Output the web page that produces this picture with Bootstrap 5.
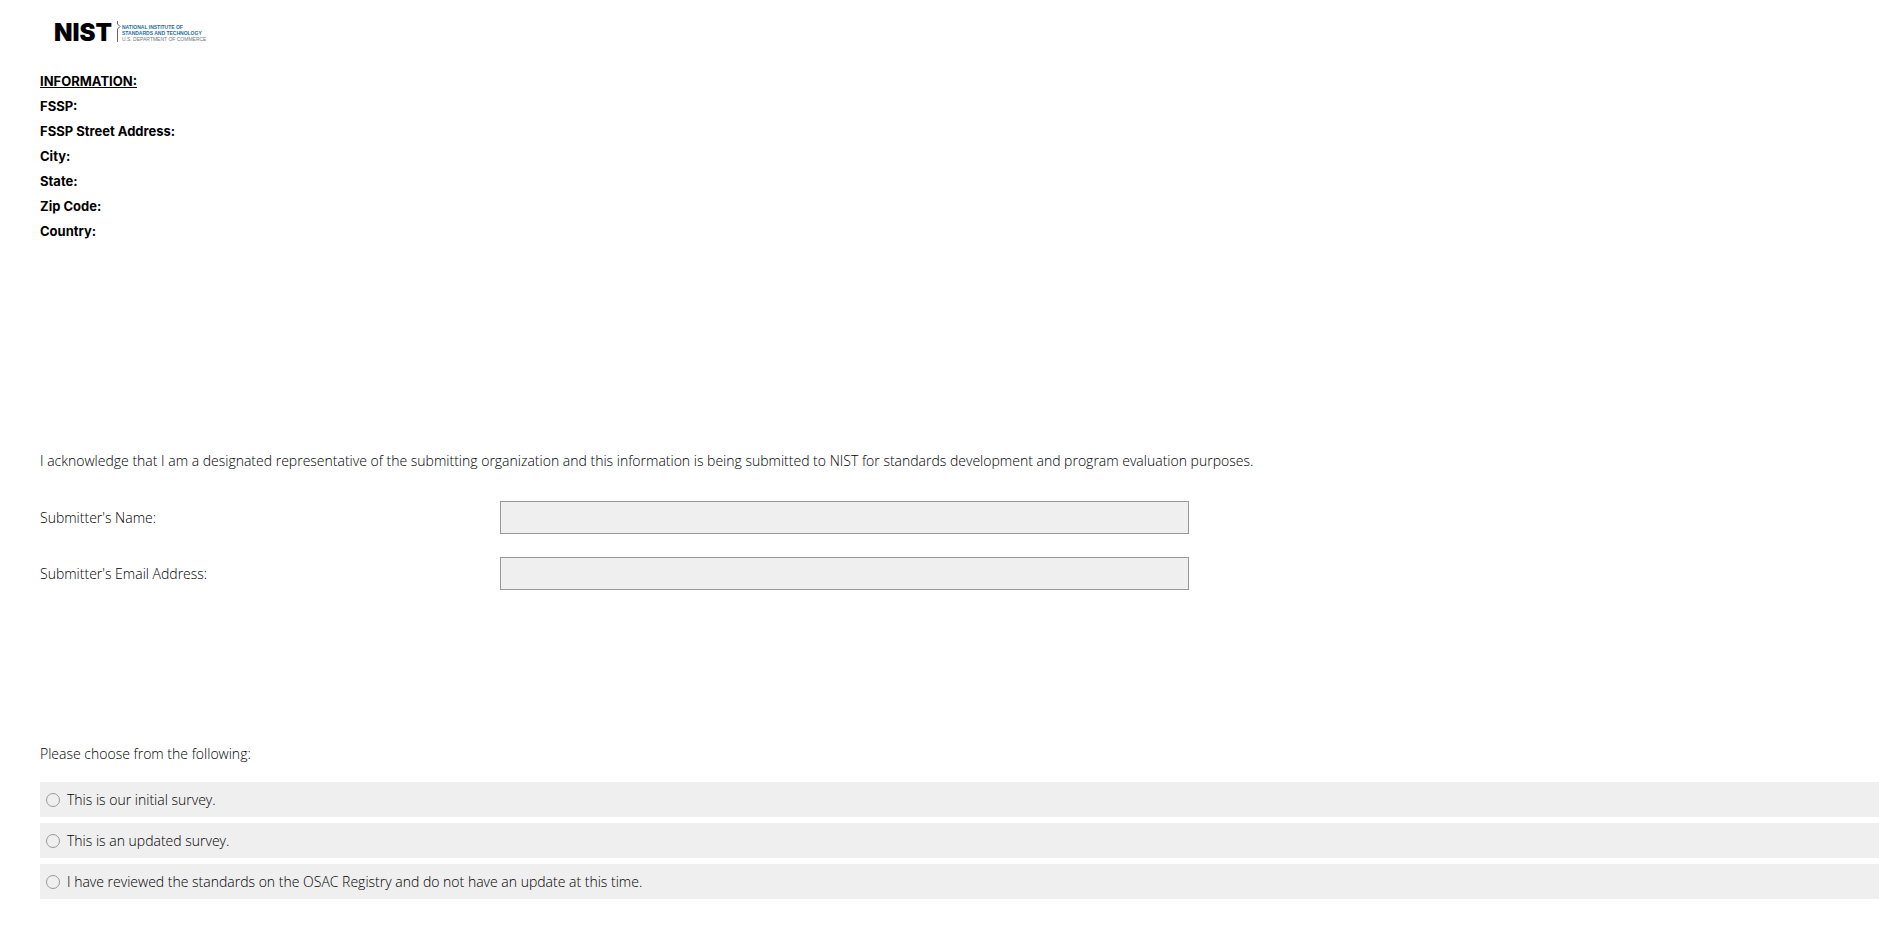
<!DOCTYPE html>
<html lang="en">
<head>
<meta charset="utf-8">
<meta name="viewport" content="width=device-width, initial-scale=1">
<title>OSAC Registry Implementation Survey</title>
<link href="https://cdn.jsdelivr.net/npm/bootstrap@5.3.0/dist/css/bootstrap.min.css" rel="stylesheet">
<style>
  body { font-family: "Open Sans", sans-serif; font-size: 14px; line-height: 25px; font-weight: 300; color: #000; background: #fff; }
  .survey { padding: 17px 13px 36px 40px; }
  .brand { display: block; width: 156px; height: 31px; margin: 0 0 21px 14px; }
  .brand .mark-text { font: 900 24px Inter, sans-serif; fill: #000; }
  .brand .agency { font: 700 5px "Liberation Sans", sans-serif; fill: #1c6fa8; }
  .brand .dept { font: 400 5px "Liberation Sans", sans-serif; fill: #777; }
  .info { font-family: Inter, sans-serif; font-size: 13px; font-weight: 700; margin-bottom: 204px; }
  .statement { margin-bottom: 28px; }
  .field-row { margin-bottom: 23px; }
  .form-control.answer { height: 33px; background: #efefef; border: 1px solid #999; border-radius: 0; }
  .choices { margin-top: 151px; }
  .choices legend { font-size: 14px; line-height: 25px; margin-bottom: 16px; }
  .choice-list { gap: 6px; }
  .choice { background: #efefef; padding: 5px 6px; gap: 7px; }
  .choice .form-check-input { width: 14px; height: 14px; margin: 0; background-color: #efefef; border: 1px solid #999; }
</style>
</head>
<body>
<main class="survey">
  <a href="#" class="brand" aria-label="National Institute of Standards and Technology">
    <svg class="d-block" width="156" height="31" viewBox="0 0 156 31">
      <text class="mark-text" x="0" y="24">NIST</text>
      <path d="M63.500 4V7L66 9.500L63.500 12V25" fill="none" stroke="#666"/>
      <text class="agency" x="68" y="12">NATIONAL INSTITUTE OF</text>
      <text class="agency" x="68" y="18">STANDARDS AND TECHNOLOGY</text>
      <text class="dept" x="68" y="24">U.S. DEPARTMENT OF COMMERCE</text>
    </svg>
  </a>
  <section class="info">
    <div class="text-decoration-underline">INFORMATION:</div>
    <div>FSSP:</div>
    <div>FSSP Street Address:</div>
    <div>City:</div>
    <div>State:</div>
    <div>Zip Code:</div>
    <div>Country:</div>
  </section>
  <form>
    <p class="statement">I acknowledge that I am a designated representative of the submitting organization and this information is being submitted to NIST for standards development and program evaluation purposes.</p>
    <div class="row g-0 align-items-center field-row">
      <label class="col-3" for="name">Submitter's Name:</label>
      <div class="col-9"><input class="form-control answer w-50" type="text" id="name"></div>
    </div>
    <div class="row g-0 align-items-center field-row">
      <label class="col-3" for="email">Submitter's Email Address:</label>
      <div class="col-9"><input class="form-control answer w-50" type="text" id="email"></div>
    </div>
    <fieldset class="choices">
      <legend>Please choose from the following:</legend>
      <div class="d-grid choice-list">
        <label class="choice d-flex align-items-center" for="c1"><input class="form-check-input" type="radio" name="survey" id="c1"><span>This is our initial survey.</span></label>
        <label class="choice d-flex align-items-center" for="c2"><input class="form-check-input" type="radio" name="survey" id="c2"><span>This is an updated survey.</span></label>
        <label class="choice d-flex align-items-center" for="c3"><input class="form-check-input" type="radio" name="survey" id="c3"><span>I have reviewed the standards on the OSAC Registry and do not have an update at this time.</span></label>
      </div>
    </fieldset>
  </form>
</main>
<script src="https://cdn.jsdelivr.net/npm/bootstrap@5.3.0/dist/js/bootstrap.bundle.min.js"></script>
</body>
</html>
